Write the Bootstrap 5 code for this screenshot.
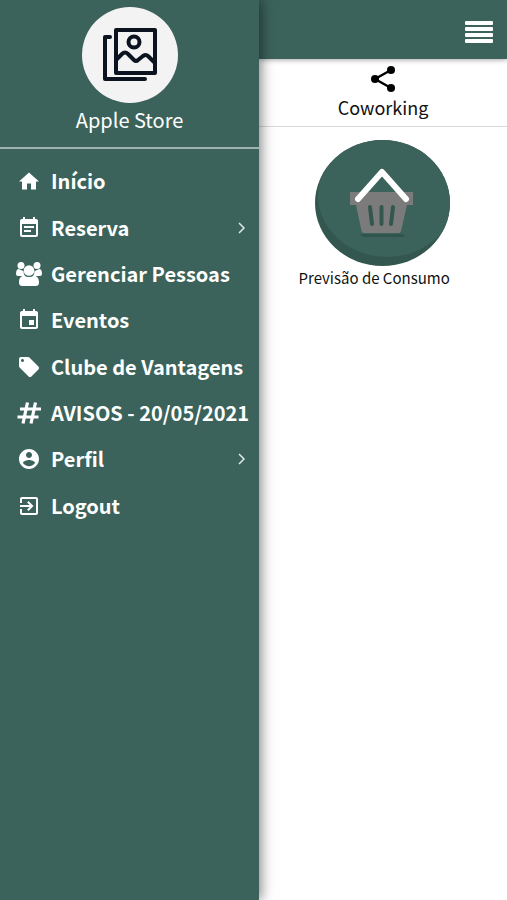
<!DOCTYPE html>
<html lang="pt-BR">
<head>
<meta charset="utf-8">
<meta name="viewport" content="width=device-width, initial-scale=1">
<title>Coworking</title>
<link rel="stylesheet" href="https://cdn.jsdelivr.net/npm/bootstrap@5.3.0/dist/css/bootstrap.min.css">
<style>
:root { --brand: #3b635b; }
body { font-family: "Noto Sans CJK SC", "Noto Sans", sans-serif; color: #111; }
.side-menu { flex: 0 0 255px; background: var(--brand); box-shadow: 2px 0 12px rgba(0, 0, 0, .5); z-index: 2; }
.side-head { border-bottom: 2px solid #9db3ae; padding: 7px 0 10px; }
.avatar { width: 96px; height: 96px; background: #f3f3f3; }
.store-name { font-size: 20px; line-height: 34px; }
.menu-list { min-height: 371px; margin-top: 9px; }
.menu-link { font-size: 20px; line-height: 30px; font-weight: 700; padding: 0 10px 0 15px; }
.menu-link .ico { width: 28px; height: 28px; margin-right: 8px; }
.top-bar { height: 59px; background: var(--brand); box-shadow: 0 1px 5px rgba(0, 0, 0, .35); padding-right: 14px; z-index: 1; }
.page-head { border-bottom: 1px solid #d9d9d9; padding: 5px 0 4px; }
.page-head h1 { font-size: 18px; line-height: 30px; font-weight: 400; }
.tile { width: 154px; margin: 13px 0 0 38px; font-size: 15px; line-height: 24px; }
.tile svg { margin-left: 16px; }
</style>
</head>
<body>
<div class="d-flex min-vh-100">
  <aside class="side-menu position-relative text-white">
    <div class="side-head d-flex flex-column align-items-center">
      <div class="avatar rounded-circle">
        <svg class="d-block" width="96" height="96" viewBox="0 0 96 96" fill="none" stroke="#0c1420" stroke-width="4" stroke-linejoin="round" stroke-linecap="round" aria-hidden="true">
          <path d="M34 23h39v43H34zM28 30h-5v42h40M35 52l5-5q3-3 6 0l6 6q2 2 4 0l5-4q3-2 5 0l6 6"/>
          <circle cx="52" cy="35" r="5.5"/>
        </svg>
      </div>
      <div class="store-name">Apple Store</div>
    </div>
    <nav aria-label="Menu principal">
      <ul class="menu-list list-unstyled d-flex flex-column mb-0">
        <li class="d-flex flex-fill"><a href="#" class="menu-link d-flex align-items-center flex-fill text-white text-decoration-none text-nowrap">
          <svg class="ico" viewBox="-2 -2 28 28" fill="currentColor" aria-hidden="true"><path d="M10 20.500v-6h4v6h5v-8h3L12 3.500 2 12.500h3v8z"/></svg>Início</a></li>
        <li class="d-flex flex-fill"><a href="#" class="menu-link d-flex align-items-center flex-fill text-white text-decoration-none text-nowrap">
          <svg class="ico" viewBox="-2 -2 28 28" fill="currentColor" aria-hidden="true"><path d="M17 10H7v2h10v-2zm2-7h-1V1h-2v2H8V1H6v2H5c-1.110 0-2 .9-2 2v14c0 1.100.890 2 2 2h14c1.100 0 2-.9 2-2V5c0-1.100-.9-2-2-2zm0 16H5V8h14v11zm-5-5H7v2h7v-2z"/></svg>Reserva
          <svg class="ms-auto" width="16" height="16" viewBox="0 0 16 16" fill="none" stroke="#dfe8e6" stroke-width="1.500" aria-hidden="true"><path d="M6 3l5 5-5 5"/></svg></a></li>
        <li class="d-flex flex-fill"><a href="#" class="menu-link d-flex align-items-center flex-fill text-white text-decoration-none text-nowrap">
          <svg class="ico" viewBox="0 0 28 28" fill="currentColor" aria-hidden="true"><circle cx="6" cy="5.500" r="3.500"/><circle cx="22" cy="5.500" r="3.500"/><path d="M1 14q0-5 3-5 4 2 4.500 2 0 3 1.500 5H3q-2 0-2-2zM27 14q0-5-3-5-4 2-4.500 2 0 3-1.500 5h7q2 0 2-2z"/><circle cx="14" cy="10.500" r="5.300"/><path d="M9 15.500q5 3 10 0c4 .5 5 4 5 7q0 3.500-3.500 3.500h-13Q4 26 4 22.500c0-3 1-6.500 5-7z"/></svg>Gerenciar Pessoas</a></li>
        <li class="d-flex flex-fill"><a href="#" class="menu-link d-flex align-items-center flex-fill text-white text-decoration-none text-nowrap">
          <svg class="ico" viewBox="-2 -2 28 28" fill="currentColor" aria-hidden="true"><path d="M17 12h-5v5h5v-5zM16 1v2H8V1H6v2H5c-1.110 0-2 .9-2 2v14c0 1.100.890 2 2 2h14c1.100 0 2-.9 2-2V5c0-1.100-.9-2-2-2h-1V1h-2zm3 18H5V8h14v11z"/></svg>Eventos</a></li>
        <li class="d-flex flex-fill"><a href="#" class="menu-link d-flex align-items-center flex-fill text-white text-decoration-none text-nowrap">
          <svg class="ico" viewBox="-2 -2 28 28" fill="currentColor" aria-hidden="true"><path d="M21.410 11.580l-9-9C12.050 2.220 11.550 2 11 2H4c-1.100 0-2 .9-2 2v7c0 .550.220 1.050.590 1.420l9 9c.360.360.860.580 1.410.580s1.050-.220 1.410-.590l7-7c.370-.360.590-.860.590-1.410s-.230-1.060-.590-1.420zM5.500 7C4.670 7 4 6.330 4 5.500S4.670 4 5.500 4 7 4.670 7 5.500 6.330 7 5.500 7z"/></svg>Clube de Vantagens</a></li>
        <li class="d-flex flex-fill"><a href="#" class="menu-link d-flex align-items-center flex-fill text-white text-decoration-none text-nowrap">
          <svg class="ico" viewBox="0 0 28 28" fill="none" stroke="currentColor" stroke-width="3.200" aria-hidden="true"><path d="M12.500 3.500L8 24.500M20.500 3.500L16 24.500M5 10h21M2.500 18h21"/></svg>AVISOS - 20/05/2021</a></li>
        <li class="d-flex flex-fill"><a href="#" class="menu-link d-flex align-items-center flex-fill text-white text-decoration-none text-nowrap">
          <svg class="ico" viewBox="-2 -2 28 28" fill="currentColor" aria-hidden="true"><path d="M12 2C6.480 2 2 6.480 2 12s4.480 10 10 10 10-4.480 10-10S17.520 2 12 2zm0 3c1.660 0 3 1.340 3 3s-1.340 3-3 3-3-1.340-3-3 1.340-3 3-3zm0 14.200c-2.500 0-4.710-1.280-6-3.220.030-1.990 4-3.080 6-3.080 1.990 0 5.970 1.090 6 3.080-1.290 1.940-3.500 3.220-6 3.220z"/></svg>Perfil
          <svg class="ms-auto" width="16" height="16" viewBox="0 0 16 16" fill="none" stroke="#dfe8e6" stroke-width="1.500" aria-hidden="true"><path d="M6 3l5 5-5 5"/></svg></a></li>
        <li class="d-flex flex-fill"><a href="#" class="menu-link d-flex align-items-center flex-fill text-white text-decoration-none text-nowrap">
          <svg class="ico" viewBox="-2 -2 28 28" fill="currentColor" aria-hidden="true"><path d="M10.090 15.590L11.500 17l5-5-5-5-1.410 1.410L12.670 11H3v2h9.670l-2.580 2.590zM19 3H5c-1.110 0-2 .9-2 2v4h2V5h14v14H5v-4H3v4c0 1.100.890 2 2 2h14c1.100 0 2-.9 2-2V5c0-1.100-.9-2-2-2z"/></svg>Logout</a></li>
      </ul>
    </nav>
  </aside>
  <div class="flex-fill bg-white">
    <header class="top-bar position-relative d-flex align-items-center justify-content-end">
      <button type="button" class="btn p-0 border-0 d-flex mt-1" aria-label="Abrir menu">
        <svg width="28" height="24" viewBox="0 0 28 24" fill="#fff" aria-hidden="true"><rect y="1" width="28" height="4" rx="1"/><rect y="7" width="28" height="4" rx="1"/><rect y="13" width="28" height="4" rx="1"/><rect y="19" width="28" height="4" rx="1"/></svg>
      </button>
    </header>
    <div class="page-head d-flex flex-column align-items-center">
      <svg width="28" height="28" viewBox="0 0 28 28" aria-hidden="true"><path d="M22 6L6 15l16 9" fill="none" stroke="#000" stroke-width="2.400"/><circle cx="22" cy="6" r="4"/><circle cx="6" cy="15" r="4"/><circle cx="22" cy="24" r="4"/></svg>
      <h1 class="mb-0">Coworking</h1>
    </div>
    <main>
      <a href="#" class="tile d-block text-center text-nowrap text-reset text-decoration-none">
        <svg class="d-block" width="138" height="126" viewBox="0 0 138 126" aria-hidden="true">
          <defs><clipPath id="disc"><ellipse cx="69.500" cy="63" rx="67.500" ry="63"/></clipPath></defs>
          <ellipse cx="69.500" cy="63" rx="67.500" ry="63" fill="#33574f"/>
          <ellipse cx="74" cy="55" rx="69" ry="62" fill="#3b635b" clip-path="url(#disc)"/>
          <path d="M46 94h44l2 3H51z" fill="#31544c"/>
          <path d="M37 52h63v13h-6l-6 26q-.5 2-2.500 2H51q-2 0-2.500-2L43 65h-6z" fill="#7b7b7b"/>
          <path d="M57 67l2 17M68.500 67v17M80 67l-2 17" stroke="#31574f" stroke-width="4" stroke-linecap="round"/>
          <path d="M45 59l24-27 24 27" fill="none" stroke="#fff" stroke-width="6" stroke-linecap="round" stroke-linejoin="round"/>
        </svg>
        Previsão de Consumo
      </a>
    </main>
  </div>
</div>
<script src="https://cdn.jsdelivr.net/npm/bootstrap@5.3.0/dist/js/bootstrap.bundle.min.js"></script>
</body>
</html>
